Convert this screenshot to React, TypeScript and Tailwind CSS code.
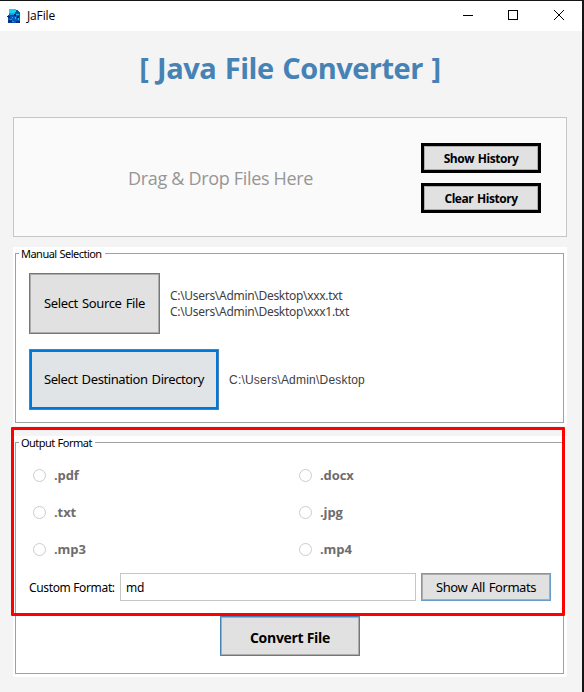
import type { ReactNode } from "react";

const ui = "font-['Open_Sans','Noto_Sans',sans-serif]";
const tahoma = "font-['Noto_Sans','Open_Sans',sans-serif]";

function AppIcon() {
  return (
    <svg width="14" height="15" viewBox="0 0 14 15" shapeRendering="crispEdges">
      <path d="M2 1h8l3 3v10H1V9L0 7l2-1z" fill="#0758b8" />
      <path d="M2 0h7v3l-2 1H2z" fill="#16d3f5" />
      <path d="M2 4h6v2H3z" fill="#12a2e8" />
      <path d="M0 7h3v2H1zM7 5h2v2H7zM10 7h2v2h-2z" fill="#0b2a75" />
      <path d="M9 5h3v1H9zM8 8h1v2H8zM11 9h1v2h-1zM5 8h1v1H5z" fill="#1cc4e8" />
      <path d="M1 11h4v3H1zM9 12h4v2H9z" fill="#06347f" />
      <path d="M3 10h2v1H3zM5 12h2v1H5z" fill="#4f7df0" />
      <path d="M4 6h2v1H4z" fill="#084298" />
    </svg>
  );
}

function TitleBar() {
  return (
    <header className="flex h-[30px] items-center bg-white pl-[7px]">
      <AppIcon />
      <span className={`${ui} ml-[6px] text-[12px] leading-none tracking-[-0.15px] text-black`}>JaFile</span>
      <div className="ml-auto flex items-center pr-[18px] pb-[2px]">
        <svg width="10" height="10" className="mr-[35px]" shapeRendering="crispEdges">
          <path d="M0 5h10v1H0z" fill="#000" />
        </svg>
        <span className="mr-[36px] size-[10px] border border-black" />
        <svg width="10" height="10">
          <path d="M0 0L10 10M10 0L0 10" stroke="#000" />
        </svg>
      </div>
    </header>
  );
}

function HistoryButton({ children }: { children: ReactNode }) {
  return (
    <button className="h-[30px] w-[120px] border-[3px] border-black bg-[#e1e1e1]">
      <span className={`${ui} flex h-full items-center justify-center border border-[#adadad] pt-[2px] text-[12px] font-bold leading-none tracking-[-0.45px] [word-spacing:1px] text-black`}>
        {children}
      </span>
    </button>
  );
}

function Panel({ title, children, className }: { title: string; children: ReactNode; className: string }) {
  return (
    <section className={`bg-white pl-[2px] pr-[3px] pt-[6px] pb-[3px] ${className}`}>
      <div className="h-full border border-[#a0a0a0]">
        <h2 className={`${tahoma} -mt-[7px] ml-[3px] h-[14px] w-fit bg-white pl-[2px] pr-[3px] text-[11px] leading-[14px] tracking-[-0.52px] [word-spacing:0.5px] text-black`}>
          {title}
        </h2>
        {children}
      </div>
    </section>
  );
}

function Radio({ label }: { label: string }) {
  return (
    <label className="flex h-[37px] items-center">
      <span className="size-[13px] rounded-full border border-[#cccccc] bg-white" />
      <span className={`${ui} ml-[8px] text-[13px] font-bold leading-none tracking-[-0.1px] text-[#6d6d6d]`}>{label}</span>
    </label>
  );
}

export default function App() {
  return (
    <div className="h-[692px] w-[584px] overflow-hidden border-r-2 border-t border-[#151515] bg-[#f4f4f4]">
      <TitleBar />
      <main className="relative h-[661px] pl-[13px]">
        <div className="flex h-[86px] w-[554px] justify-center">
          <h1 className={`${ui} mt-[17px] whitespace-nowrap text-[29px] font-bold leading-[40px] tracking-[-0.5px] [word-spacing:1.6px] text-[#4682b4]`}>
            [ Java File Converter ]
          </h1>
        </div>

        <div className="flex h-[120px] w-[554px] items-center border border-[#c6c6c6] bg-[#fafafa] pt-[2px]">
          <p className={`${ui} ml-[114px] w-[293px] whitespace-nowrap text-[18px] leading-none tracking-[-0.32px] text-[#969696]`}>
            Drag &amp; Drop Files Here
          </p>
          <div className="flex flex-col gap-[10px]">
            <HistoryButton>Show History</HistoryButton>
            <HistoryButton>Clear History</HistoryButton>
          </div>
        </div>

        <Panel title="Manual Selection" className="mt-[10px] h-[179px] w-[554px]">
          <div className="mt-[12px] flex h-[61px] items-center pl-[13px]">
            <button className="h-[61px] w-[131px] border border-[#4682b4] bg-[#e1e1e1]">
              <span className={`${tahoma} flex h-full items-center justify-center border border-[#adadad] text-[13px] leading-none tracking-[-0.35px] [word-spacing:1px] text-black`}>
                Select Source File
              </span>
            </button>
            <p className={`${tahoma} ml-[10px] text-[12px] leading-[16px] tracking-[-0.3px] text-[#404040]`}>
              C:\Users\Admin\Desktop\xxx.txt
              <br />
              C:\Users\Admin\Desktop\xxx1.txt
            </p>
          </div>
          <div className="mt-[15px] flex h-[61px] items-center pl-[13px]">
            <button className="h-[61px] w-[190px] border border-[#4682b4] bg-[#e0e4e7]">
              <span className={`${tahoma} flex h-full items-center justify-center whitespace-nowrap border-2 border-[#0078d7] text-[13px] leading-none tracking-[-0.4px] [word-spacing:1px] text-black`}>
                Select Destination Directory
              </span>
            </button>
            <p className="ml-[10px] font-['Liberation_Sans',sans-serif] text-[12px] leading-none tracking-[0.21px] text-[#404040]">
              C:\Users\Admin\Desktop
            </p>
          </div>
        </Panel>

        <Panel title="Output Format" className="mt-[10px] h-[241px] w-[554px]">
          <div className="mt-[7px] grid grid-cols-[266px_1fr] pl-[17px]">
            <Radio label=".pdf" />
            <Radio label=".docx" />
            <Radio label=".txt" />
            <Radio label=".jpg" />
            <Radio label=".mp3" />
            <Radio label=".mp4" />
          </div>
          <div className="mt-[5px] flex items-center pl-[13px]">
            <span className={`${tahoma} w-[91px] whitespace-nowrap pt-[2px] text-[12px] leading-none tracking-[-0.35px] text-black`}>Custom Format:</span>
            <input
              defaultValue="md"
              className={`${tahoma} h-[28px] w-[296px] border border-[#c6c6c6] bg-white pl-[5px] text-[12px] tracking-[-0.2px] text-black outline-none`}
            />
            <button className="ml-[5px] h-[28px] w-[130px] border border-[#6a9ccb] bg-[#e1e1e1]">
              <span className={`${tahoma} flex h-full items-center justify-center whitespace-nowrap border border-[#adadad] text-[13px] leading-none tracking-[-0.45px] [word-spacing:1px] text-black`}>
                Show All Formats
              </span>
            </button>
          </div>
          <button className="ml-[204px] mt-[15px] block h-[40px] w-[140px] border border-[#4682b4] bg-[#e1e1e1]">
            <span className={`${ui} flex h-full items-center justify-center border border-[#adadad] pt-[3px] text-[14px] font-bold leading-none tracking-[-0.3px] text-black`}>
              Convert File
            </span>
          </button>
        </Panel>
        <div className="pointer-events-none absolute left-[11px] top-[396px] h-[189px] w-[554px] rounded-[1px] border-[3px] border-[#ff0000]" />
      </main>
    </div>
  );
}
